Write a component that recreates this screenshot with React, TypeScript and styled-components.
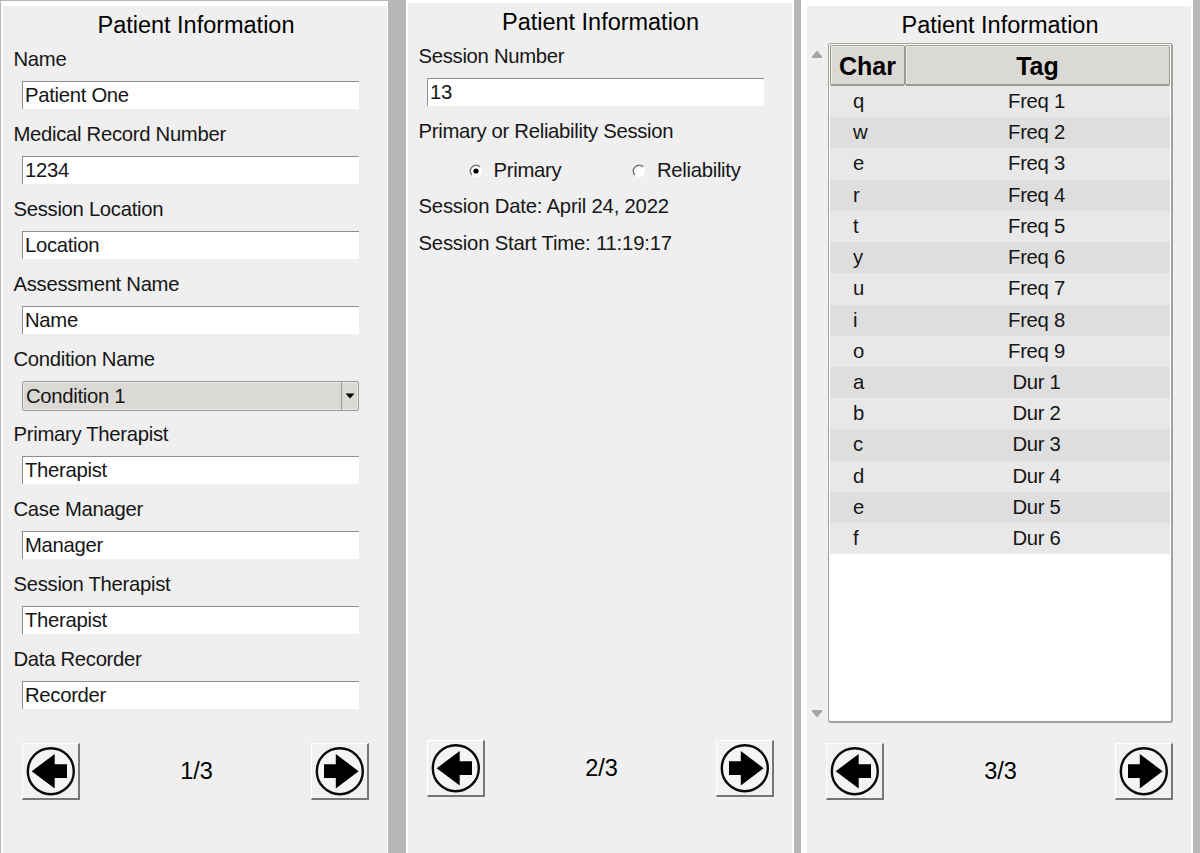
import React from "react";
import styled, { createGlobalStyle, css } from "styled-components";

const GlobalStyle = createGlobalStyle`
  *, *::before, *::after { box-sizing: border-box; }
  body { margin: 0; background: #b5b8b6; font-family: "Liberation Sans", Arial, sans-serif; color: #161616; }
  #root { height: 853px; overflow: hidden; }
`;

const Screen = styled.main`
  display: grid;
  grid-template-columns: 387px 388px 392px;
  column-gap: 0;
  width: 1200px;
  height: 853px;
  padding-left: 1px;
  overflow: hidden;
`;

const panelShape = {
  first: css`margin-top: 1px; border-width: 5px 1px 0 2px;`,
  second: css`margin-left: 18px; width: 388px; border-width: 3px 2px 0 2px;`,
  third: css`margin-left: 25px; width: 392px; border-width: 6px 2px 0 6px;`,
};

const Panel = styled.section<{ $kind: keyof typeof panelShape }>`
  display: flex;
  flex-direction: column;
  background: #efefef;
  border: 0 solid #fff;
  ${(p) => panelShape[p.$kind]}
`;

const Title = styled.h1<{ $shift?: number }>`
  margin: 0;
  height: 38px;
  line-height: 38px;
  font-size: 23.5px;
  font-weight: 400;
  letter-spacing: -0.02px;
  text-align: center;
  color: #000;
  padding-left: ${(p) => p.$shift ?? 0}px;
`;

const Body = styled.div`
  height: 699px;
  padding: 0 28px 0 10.5px;
`;

const bodyText = css`
  font-size: 20.3px;
  letter-spacing: -0.3px;
  white-space: nowrap;
`;

const Group = styled.div`
  height: 75px;
`;

const Label = styled.div`
  height: 30px;
  line-height: 30px;
  ${bodyText}
`;

const Entry = styled.div`
  height: 28px;
  margin: 6.5px 0 0 8.5px;
  padding-left: 2px;
  line-height: 26px;
  ${bodyText}
  background: #fff;
  border-top: 1px solid #8e8e8e;
  border-left: 1px solid #8e8e8e;
`;

const Combo = styled.div`
  display: flex;
  height: 30px;
  margin: 6.5px 0 0 8.5px;
  line-height: 28px;
  ${bodyText}
  background: #dbd9d4;
  border: 1px solid #9d9a93;
  border-radius: 2px;
  box-shadow: inset 0 0 0 1px #eceae6;
`;

const ComboText = styled.span`
  flex: 1;
  padding-left: 3px;
`;

const ComboArrow = styled.span`
  display: flex;
  align-items: center;
  justify-content: center;
  width: 17px;
  border-left: 1px solid #9d9a93;
`;

const Radios = styled.div`
  display: grid;
  grid-template-columns: 163.5px auto;
  height: 44.5px;
  padding: 5px 0 0 50px;
`;

const Radio = styled.div`
  display: flex;
  align-items: center;
  gap: 11px;
  ${bodyText}
`;

const Line = styled.div`
  height: 37.5px;
  line-height: 30px;
  ${bodyText}
  letter-spacing: -0.2px;
`;

const Nav = styled.nav`
  display: flex;
  justify-content: space-between;
  align-items: center;
  width: 347px;
  height: 57px;
  margin-left: 19px;
`;

const PageNumber = styled.span`
  font-size: 23.5px;
  color: #000;
  padding-left: 2px;
`;

const NavButton = styled.button`
  display: block;
  width: 58px;
  height: 57px;
  padding: 0;
  background: #f1f1f1;
  border: solid;
  border-width: 1px 2px 2px 1px;
  border-color: #fff #777 #777 #fff;
`;

const TableArea = styled.div`
  display: grid;
  grid-template-columns: 21px 345px;
  height: 680px;
  margin: -1px 0 20px;
`;

const Scroll = styled.div`
  display: flex;
  flex-direction: column;
  justify-content: space-between;
  align-items: center;
  padding: 7px 2px 5px 0;
`;

const Table = styled.div`
  background: #fff;
  border: 1px solid #a3a198;
  border-right-width: 2px;
  border-bottom-width: 2px;
  border-radius: 3px;
  padding: 1px 1px 0;
`;

const HeadRow = styled.div`
  display: grid;
  grid-template-columns: 75px 1fr;
  height: 41px;
`;

const HeadCell = styled.div`
  height: 41px;
  border: 1px solid #9d9a90;
  border-bottom-width: 2px;
  border-radius: 2px;
  box-shadow: inset 1px 1px 0 #efede8;
  background: #dbd9d3;
  text-align: center;
  font-size: 25px;
  line-height: 40px;
  font-weight: 700;
  color: #000;
`;

const Row = styled.div<{ $dark: boolean }>`
  display: grid;
  grid-template-columns: 75px 1fr;
  height: 31.22px;
  line-height: 31px;
  ${bodyText}
  background: ${(p) => (p.$dark ? "#dedede" : "#e8e8e8")};
`;

const CharCell = styled.span`
  padding-left: 23px;
`;

const TagCell = styled.span`
  padding-right: 2px;
  text-align: center;
`;

const fields = [
  ["Name", "Patient One"],
  ["Medical Record Number", "1234"],
  ["Session Location", "Location"],
  ["Assessment Name", "Name"],
  ["Condition Name", "Condition 1"],
  ["Primary Therapist", "Therapist"],
  ["Case Manager", "Manager"],
  ["Session Therapist", "Therapist"],
  ["Data Recorder", "Recorder"],
];

const keys = ["q", "w", "e", "r", "t", "y", "u", "i", "o", "a", "b", "c", "d", "e", "f"];
const rows = keys.map((key, i) => [key, i < 9 ? `Freq ${i + 1}` : `Dur ${i - 8}`]);

function ArrowIcon({ back }: { back?: boolean }) {
  return (
    <svg width="55" height="54" viewBox="0 0 55 54" display="block">
      <circle cx="27.8" cy="27.2" r="23" fill="#f4f4f4" stroke="#0a0a0a" strokeWidth="2.4" />
      <path
        d={back ? "M8.7 27.2 31.7 10v10.3H44v13.8H31.7v10.4Z" : "M46.6 27.2 23.8 10v10.3H12v13.8h11.8v10.4Z"}
        fill="#000"
      />
    </svg>
  );
}

function RadioDot({ on }: { on?: boolean }) {
  return (
    <svg width="14" height="14" viewBox="0 0 14 14">
      <circle cx="7" cy="7" r="6" fill="#fff" />
      <path d="M2.9 11.1A5.8 5.8 0 0 1 11.1 2.9" fill="none" stroke="#777" strokeWidth="1.5" />
      {on && <circle cx="7" cy="7" r="2.6" fill="#000" />}
    </svg>
  );
}

function Pager({ page }: { page: number }) {
  return (
    <Nav>
      <NavButton aria-label="Previous"><ArrowIcon back /></NavButton>
      <PageNumber>{page}/3</PageNumber>
      <NavButton aria-label="Next"><ArrowIcon /></NavButton>
    </Nav>
  );
}

export default function App() {
  return (
    <>
      <GlobalStyle />
      <Screen>
        <Panel $kind="first">
          <Title $shift={2}>Patient Information</Title>
          <Body>
            {fields.map(([label, value]) => (
              <Group key={label}>
                <Label>{label}</Label>
                {label === "Condition Name" ? (
                  <Combo>
                    <ComboText>{value}</ComboText>
                    <ComboArrow>
                      <svg width="10" height="6" viewBox="0 0 10 6"><path d="M.5.5h9L5 5.5Z" fill="#000" /></svg>
                    </ComboArrow>
                  </Combo>
                ) : (
                  <Entry>{value}</Entry>
                )}
              </Group>
            ))}
          </Body>
          <Pager page={1} />
        </Panel>
        <Panel $kind="second">
          <Title $shift={1}>Patient Information</Title>
          <Body>
            <Group>
              <Label>Session Number</Label>
              <Entry>13</Entry>
            </Group>
            <Label>Primary or Reliability Session</Label>
            <Radios>
              <Radio><RadioDot on />Primary</Radio>
              <Radio><RadioDot />Reliability</Radio>
            </Radios>
            <Line>Session Date: April 24, 2022</Line>
            <Line>Session Start Time: 11:19:17</Line>
          </Body>
          <Pager page={2} />
        </Panel>
        <Panel $kind="third">
          <Title $shift={2}>Patient Information</Title>
          <TableArea>
            <Scroll>
              <svg width="12" height="9" viewBox="0 0 12 9"><path d="M6 .5 11 6.500V8H1V6.500Z" fill="#a5a5a5" /></svg>
              <svg width="12" height="9" viewBox="0 0 12 9"><path d="M6 8.500 11 2.500V1H1v1.500Z" fill="#a5a5a5" /></svg>
            </Scroll>
            <Table>
              <HeadRow>
                <HeadCell>Char</HeadCell>
                <HeadCell>Tag</HeadCell>
              </HeadRow>
              {rows.map(([key, tag], i) => (
                <Row key={tag} $dark={i % 2 === 1}>
                  <CharCell>{key}</CharCell>
                  <TagCell>{tag}</TagCell>
                </Row>
              ))}
            </Table>
          </TableArea>
          <Pager page={3} />
        </Panel>
      </Screen>
    </>
  );
}
